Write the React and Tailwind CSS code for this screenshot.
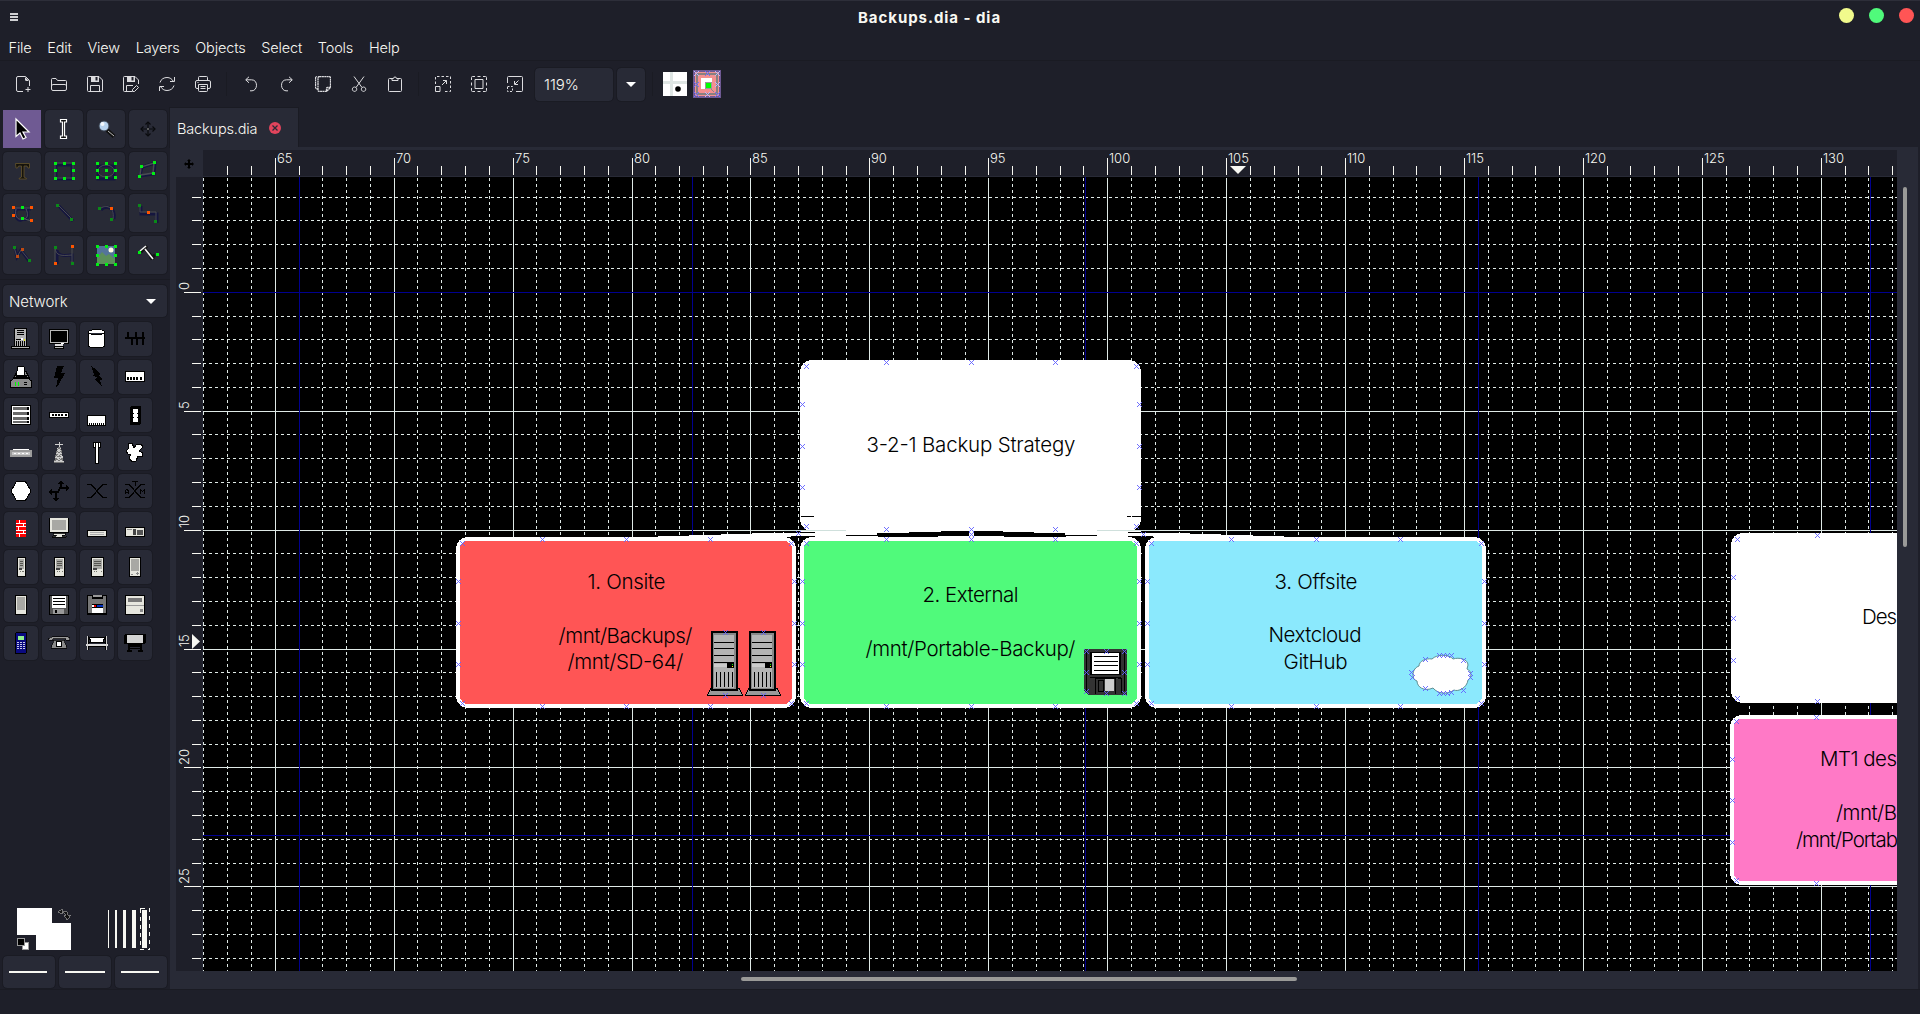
import React from "react";

const INK = "#f8f8f2";
const STEP = 23.785;
const gx = (v) => Math.floor(275.25 + (v - 65) * STEP);
const gy = (v) => Math.floor(292.25 + v * STEP);
const range = (a, b) => Array.from({ length: b - a + 1 }, (_, i) => a + i);

/* ---------- small drawing helpers ---------- */
const R = ({ x, y, w, h, c = "#000" }) => <rect x={x} y={y} width={w} height={h} fill={c} />;
const P = ({ d, c = "#000", w = 1, f = "none" }) => <path d={d} stroke={c} strokeWidth={w} fill={f} />;
const G = (pts) => pts.map(([x, y], i) => <R key={"g" + i} x={x} y={y} w={3} h={3} c="#00f014" />);
const GD = (pts) => pts.map(([x, y], i) => <R key={"d" + i} x={x} y={y} w={3} h={3} c="#0a8a18" />);
const O = (pts) => pts.map(([x, y], i) => <R key={"o" + i} x={x} y={y} w={3} h={3} c="#ff5500" />);
const OD = (pts) => pts.map(([x, y], i) => <R key={"p" + i} x={x} y={y} w={3} h={3} c="#c04a10" />);

/* ---------- toolbar icons, 16 x 16 ---------- */
const bar = {
  new: <><path d="M8 15.500H3a1.500 1.500 0 0 1-1.500-1.500V2A1.500 1.500 0 0 1 3 .5h7.500l4 4V10M10.500 13.500h5M13 11v5" /><path d="M10 1l4 4h-2.500A1.500 1.500 0 0 1 10 3.500z" fill="#dcdcdf" stroke="none" /></>,
  open: <path d="M.5 13V3.500a1 1 0 0 1 1-1H5l1.500 2h8a1 1 0 0 1 1 1V13a1.500 1.500 0 0 1-1.500 1.500H2A1.500 1.500 0 0 1 .5 13zM.5 9.500 2 8.500h12l1.500 1" />,
  save: <><path d="M1.500.5H12L15.500 4v10.500a1 1 0 0 1-1 1h-13a1 1 0 0 1-1-1v-13a1 1 0 0 1 1-1zM3.500 15.500v-6h9v6" /><path d="M4 0h8v6H4zM8.500 1v3.500h2V1z" fill="#dcdcdf" fillRule="evenodd" stroke="none" /></>,
  saveas: <><path d="M9 15.500H1.500a1 1 0 0 1-1-1v-13a1 1 0 0 1 1-1H12L15.500 4v4M3.500 15.500v-6H10M9.500 15.500v-2l4-4 2 2-4 4z" /><path d="M4 0h8v6H4zM8.500 1v3.500h2V1z" fill="#dcdcdf" fillRule="evenodd" stroke="none" /></>,
  refresh: <path d="M1 6.500C2 3 5 1.500 8 1.500c3 0 5 1.500 6.500 4M15.500 1v4.500H11M15 9.500c-1 3.500-4 5-7 5s-5-1.500-6.500-4M.5 15v-4.500H5" />,
  print: <path d="M3.500 4.500v-3a1 1 0 0 1 1-1h7a1 1 0 0 1 1 1v3M3.500 12.500H2A1.500 1.500 0 0 1 .5 11V6A1.500 1.500 0 0 1 2 4.500h12A1.500 1.500 0 0 1 15.500 6v5a1.500 1.500 0 0 1-1.500 1.500h-1.500M3.500 8.500h9v6a1 1 0 0 1-1 1h-7a1 1 0 0 1-1-1zM5.500 10.500h5M5.500 12.500h5M2.500 6.500h1" />,
  undo: <path d="M6 .8 2.700 3.800 6 6.800M3 3.800h5.500c3.500 0 5 2.500 5 5.500s-2 5.500-4.500 5.500H7" />,
  redo: <path d="M10 .8l3.300 3L10 6.800M13 3.800H7.500c-3.500 0-5 2.500-5 5.500s2 5.500 4.500 5.500h2" />,
  copy: <path strokeWidth="1.300" strokeDasharray="2 .4" d="M4.500.5h9.500a1.500 1.500 0 0 1 1.500 1.500v9.500l-4 4H4.500A1.500 1.500 0 0 1 3 14V2A1.500 1.500 0 0 1 4.500.5M11.500 15v-2.500a1 1 0 0 1 1-1h3M3 13.500 .5 12V2A1.500 1.500 0 0 1 2 .5" />,
  cut: <path d="M3 .5 11 11.500M13 .5 5 11.500M3.500 11a2.200 2.200 0 1 0 .1 0zM12.500 11a2.200 2.200 0 1 0 .1 0z" />,
  paste: <path d="M5 2.500H2.500a1 1 0 0 0-1 1v11a1 1 0 0 0 1 1h11a1 1 0 0 0 1-1v-11a1 1 0 0 0-1-1H11M5 4.500v-2h1.500a1.500 1.500 0 0 1 3 0H11v2z" />,
  zoomin: <><path strokeDasharray="2.500 2" d="M.5 8V.5h15v15H9" /><path d="M.5 10.500h4.500v5H.5zM7 9l4.500-4.500M8 4.500h3.500V8" /></>,
  zoomfit: <path d="M4 3.500h8v9H4zM.5 4V1.500a1 1 0 0 1 1-1H4M12 .5h2.500a1 1 0 0 1 1 1V4M15.500 12v2.500a1 1 0 0 1-1 1H12M4 15.500H1.500a1 1 0 0 1-1-1V12M6.500.5h3M6.500 15.500h3M.5 6.500v3M15.500 6.500v3" />,
  zoomout: <><path d="M.5 7V1.500a1 1 0 0 1 1-1h13a1 1 0 0 1 1 1v13a1 1 0 0 1-1 1H9M11.500 4.500 8 8M7.500 5v3.500H11" /><path strokeDasharray="2 1.500" d="M.5 10.500h5v5h-5z" /></>,
};

const BarIcon = ({ name }) => (
  <button className="flex h-9 w-9 items-center justify-center">
    <svg className="h-4 w-4" viewBox="0 0 16 16" fill="none" stroke="#dcdcdf" strokeWidth="1">{bar[name]}</svg>
  </button>
);
const BarSep = () => <div className="mx-[5px] h-6 w-[2px] border-l border-[#1a1b23]" />;

/* ---------- drawing tools, 22 x 22 ---------- */
const NAVY = "#15163f";
const sh = (d) => <P d={d} c={NAVY} w={3} />;
const at = (x, y, node) => <g transform={`translate(${x} ${y})`}>{node}</g>;
const tools = [
  <path d="M5 1v17.500l4-3.500 3 6 3-1.500-3-5.500h6z" fill="#000" stroke="#fff" strokeWidth="1.200" />,
  <path d="M7.500 1.500h6v2.500h-2v14h2v2.500h-6V18h2V4h-2z" fill="#111" stroke="#fff" strokeWidth="1.200" />,
  at(2, 1, <><P d="M10 11l7 6.500" c="#111" w={4} /><P d="M11 12l6 5" c="#b9b9b9" w={1} /><circle cx="7" cy="7" r="5" fill="#b6d2ee" stroke="#39414e" /><circle cx="5.500" cy="5" r="2" fill="#f3f8fd" /></>),
  <><P d="M11 4v14M4 11h14" c="#090a0d" w={1.200} /><P d="M8.500 6.500 11 4l2.500 2.500M8.500 15.500 11 18l2.500-2.500M6.500 8.500 4 11l2.500 2.500M15.500 8.500 18 11l-2.500 2.500" c="#090a0d" w={1.200} /><circle cx="11" cy="11" r="1" fill="#777" /></>,
  <path d="M4.500 3.500h14V8h-1.500l-1-2h-3v11l2.500 1.500v.5H8v-.5l2.500-1.500V6h-3l-1 2H5z" fill="#15130c" stroke="#64542c" strokeWidth=".8" />,
  <>{sh("M3 5h16v14H3z")}<P d="M2 3h18v15H2z" c="#4a4b52" />{G([[1, 2], [10, 2], [19, 2], [1, 9], [19, 9], [1, 17], [10, 17], [19, 17]])}</>,
  at(0, 1, <>{sh("M3 5h16v13H3z")}<ellipse cx="11" cy="10" rx="8" ry="6" fill="none" stroke="#4a4b52" />{G([[1, 1], [10, 1], [19, 1], [1, 8], [10, 8], [19, 8], [1, 15], [10, 15], [19, 15]])}</>),
  at(0, 1, <>{sh("M3 15 5 6l13-4-1 11z")}<P d="M3 14 4 6l13-4-1 10z" c="#4a4b52" w={1.500} />{G([[1, 14], [3, 4], [16, 0], [15, 11]])}</>),
  at(0, 3, <>{sh("M3 4h17M5 5c-2 10 5 12 7 9 4 2 6-2 4-10")}<P d="M2 3h18M5 4c-2 9 4 12 6 9 5 3 7-3 4-9M11 13l9 3" c="#54555c" />{O([[1, 1], [19, 1], [1, 9], [19, 14]])}{G([[10, 1], [10, 12]])}</>),
  at(2, 2, <>{sh("M4 2 18 17")}<P d="M3 1 17 15" c="#4b4c50" />{GD([[1, 0], [15, 14]])}</>),
  at(2, 3, <>{sh("M4 5c5-5 15-3 13 9")}<P d="M3 4c5-5 15-3 13 10" c="#4b4c50" />{GD([[1, 2], [13, 13]])}{O([[13, 2]])}</>),
  at(1, 2, <>{sh("M3 2v8h16v9")}<P d="M2 1v7h16v9" c="#4b4c50" />{GD([[0, 0], [16, 16]])}{O([[9, 7]])}</>),
  at(1, 1, <>{sh("M3 3 5 12 9 5 17 16")}<P d="M2 2 5 12 9 5 17 15" c="#4b4c50" />{GD([[1, 1], [16, 14]])}{OD([[4, 10], [9, 3]])}</>),
  at(0, 1, <>{sh("M4 19V5c0 8 14 5 15 5v6")}<P d="M2 18V3c1 8 6 8 17 7M19 1v16" c="#4b4c50" />{GD([[1, 1], [18, 17]])}{O([[18, 0], [1, 17]])}</>),
  at(0, 1, <><R x={2} y={1} w={18} h={18} c="#54749a" /><circle cx="16" cy="5" r="2.500" fill="#fffce0" /><path d="M2 13l5-6 4 4 3-2 6 5v5H2z" fill="#5c8f5a" />{G([[1, 0], [10, 0], [19, 0], [1, 9], [19, 9], [1, 18], [10, 18], [19, 18]])}</>),
  at(0, 1, <><P d="M4 7 10 1M8 4l9 10M13 14l5-4" c="#111" w={3} /><P d="M3 6 9 1M8 4l8 10" c="#f4f4f4" w={1.600} />{G([[1, 6], [19, 8]])}</>),
];

/* ---------- network shapes, 22 x 22 ---------- */
const PC = ({ w, x }) => (
  <><R x={x} y={1} w={w} h={20} /><R x={x + 1} y={2} w={w - 2} h={18} c="#e6e6de" /><R x={x + 2} y={3} w={w - 4} h={10} c="#a8a8a4" />
    <P d={`M${x + 3} 5.500h${w - 6}M${x + 3} 7.500h${w - 6}M${x + 3} 9.500h${w - 6}`} c="#55554f" /><R x={x + 2} y={12} w={w > 9 ? 4 : 3} h={2} c="#444" /><P d={`M${x + 3} 15.500h1M${x + 5} 15.500h1M${x + w - 3} 15.500h1`} c="#77776f" /></>
);
const shapes = [
  <><R x={4} y={0} w={13} h={19} /><R x={5} y={1} w={11} h={17} c="#b4b4b4" /><P d="M7 2.500h7M7 4.500h7M7 6.500h7M6 11.500h5" /><R x={11} y={10} w={2} h={2} c="#fff" /><R x={14} y={11} w={1} h={2} c="#e8e800" /><P d="M6.500 13v5M8.500 13v5M10.500 13v5M12.500 13v5M14.500 13v5" /><R x={1} y={18} w={19} h={3} /><R x={2} y={19} w={17} h={1} c="#b4b4b4" /></>,
  <><R x={1} y={1} w={20} h={15} /><R x={2} y={2} w={18} h={13} c="#b8b8b8" /><R x={3} y={3} w={16} h={11} /><R x={7} y={16} w={8} h={2} c="#e0e0e0" /><R x={13} y={15} w={3} h={1} c="#fff" /><R x={6} y={18} w={10} h={3} /><R x={7} y={19} w={8} h={1} c="#b8b8b8" /></>,
  <path d="M2.500 4.500c0-4 16-4 16 0v13c0 3-16 3-16 0zM2.500 5c3 2 13 2 16 0" fill="#fff" stroke="#000" />,
  <><R x={1} y={9} w={20} h={2} />{[3, 11, 18].map((x) => <R key={x} x={x} y={4} w={2} h={6} />)}{[8, 13, 19].map((x) => <R key={x} x={x - 1} y={10} w={2} h={7} />)}</>,
  <><path d="M3.500 12.500 7 5.500h9l3.500 7z" fill="#888" stroke="#000" /><path d="M6 9h11l1 4H5z" fill="#000" /><path d="M7.500.5h6.500l1 8.500h-8.500z" fill="#fff" stroke="#000" /><path d="M.5 15 4 12.500h14L21.500 15v6H.5z" fill="#8b8b8b" stroke="#000" /><R x={5} y={16} w={1} h={4} c="#0f0" /><R x={8} y={16} w={1} h={4} c="#0f0" /><R x={14} y={16} w={3} h={1} /><R x={14} y={18} w={3} h={1} /></>,
  <path d="M9 0h7l-3 7h4L10 20l-2 1 2-9H6z" fill="#000" />,
  <path d="M5 0l3 2 6 6-1 2 4 3-3 1 2 7-7-8 2-2-4-1 1-2z" fill="#000" />,
  <><R x={1} y={5} w={20} h={11} /><R x={2} y={6} w={18} h={9} c="#fff" />{[3, 6, 9, 12, 16].map((x) => <R key={x} x={x} y={11} w={2} h={3} />)}</>,
  <><R x={1} y={1} w={20} h={20} /><R x={2} y={2} w={18} h={18} c="#fff" />{[3, 8, 13, 17].map((y) => <R key={y} x={3} y={y} w={16} h={y > 15 ? 2 : 3} c="#6a6a6a" />)}<P d="M18 3v3M18 8v3M18 13v3M18 17v2" w={2} /></>,
  <><R x={1} y={8} w={20} h={6} /><R x={2} y={9} w={18} h={4} c="#fff" />{[4, 7, 10, 13, 17].map((x) => <R key={x} x={x} y={10} w={2} h={2} />)}</>,
  <><R x={1} y={11} w={19} h={11} /><R x={2} y={12} w={17} h={9} c="#fff" />{[3, 5, 7, 9, 11, 13, 15, 17].map((x) => <R key={x} x={x} y={19} w={1} h={2} />)}</>,
  <><rect x="6" y="2" width="11" height="19" rx="2" fill="#000" /><R x={9} y={5} w={5} h={13} c="#fff" /><P d="M9 9.500h1M13 9.500h1M9 13.500h1M13 13.500h1" w={1} /></>,
  <><R x={0} y={8} w={22} h={7} c="#9c9c9c" /><R x={3} y={7} w={16} h={1} c="#fff" /><R x={2} y={10} w={18} h={3} c="#c8c8c8" />{[4, 8, 12, 16].map((x) => <R key={x} x={x} y={11} w={2} h={1} c="#fff" />)}</>,
  <><P d="M7 2.500h8M11.500 0v5" c="#d0d0d0" /><path d="M10 5h3l1 6 2 10H6l2-10z" fill="#777" /><P d="M9 8h4M8 11h6M7 15h8M6 19h10M9 6l4 5-5 4 7 5M13 6l-4 5 6 4-8 5" c="#ccc" /></>,
  <><path d="M7 0h8v6h-2v16H9V6H7z" fill="#000" /><R x={10} y={5} w={2} h={16} c="#fff" /><R x={8} y={1} w={1} h={4} c="#fff" /><R x={13} y={1} w={1} h={4} c="#fff" /><R x={10} y={1} w={2} h={4} c="#fff" /></>,
  <path d="M4 2l4-1 2 5 2-3 5-1 2 3-4 4 4 2-1 4-4-1-2 5-4 1-3-4 2-4-3 0-2-3 3-3z" fill="#fff" stroke="#000" />,
  <path d="M6.500 1.500h9L21 11l-5.500 9.500h-9L1 11z" fill="#fff" stroke="#000" />,
  <><P d="M1 12h9l2-4h9M8 20v-8M13 2v7" w={1.500} /><path d="M0 12l4-3v6zM22 8l-4-3v6zM8 22l-3-4h6zM13 0l-3 4h6z" fill="#000" /></>,
  <P d="M1 4.500h4l12 13h4M1 17.500h4l12-13h4" w={1.300} />,
  <><P d="M1 4.500h4l12 13h4M1 17.500h4l12-13h4" w={1.300} /><P d="M1.500 14v-3l1.500-2 1.500 2v3M1.500 12.500h3M8 1.500h6M11 2v4M16.500 14V9.500l2 2 2-2V14" /></>,
  <><R x={6} y={2} w={10} h={17} c="#f00" />{[5, 8, 12, 15].map((y) => <R key={y} x={6} y={y} w={10} h={1} c="#fff" />)}<R x={9} y={2} w={1} h={3} c="#fff" /><R x={13} y={6} w={1} h={2} c="#fff" /><R x={8} y={9} w={1} h={3} c="#fff" /><R x={13} y={13} w={1} h={2} c="#fff" /><R x={9} y={16} w={1} h={3} c="#fff" /></>,
  <><R x={1} y={0} w={20} h={15} /><R x={2} y={0} w={18} h={14} c="#e6e6de" /><R x={4} y={2} w={14} h={10} c="#a8a8a4" /><path d="M5 15h12v2h-3v1h4v1H4v-1h4v-1H5z" fill="#e6e6de" stroke="#000" strokeWidth=".8" /></>,
  <><R x={1} y={12} w={20} h={7} /><R x={2} y={13} w={18} h={5} c="#e6e6de" /><P d="M4 14.500h14M4 16.500h14" c="#aaa" /></>,
  <><R x={1} y={9} w={20} h={10} /><R x={2} y={10} w={18} h={8} c="#e6e6de" /><P d="M3 11.500h5" c="#888" /><R x={9} y={11} w={3} h={6} c="#444" /><R x={13} y={12} w={6} h={5} c="#555" /></>,
  <PC x={7} w={9} />, <PC x={6} w={11} />, <PC x={5} w={13} />,
  <><R x={5} y={1} w={12} h={20} /><R x={6} y={2} w={10} h={18} c="#e6e6de" /><rect x="7" y="3" width="8" height="12" rx="1" fill="#a8a8a4" /><P d="M7 18.500h2M12 17.500h3M13.500 16v3" c="#888" /></>,
  <><R x={5} y={1} w={12} h={20} /><R x={6} y={2} w={10} h={18} c="#e6e6de" /><rect x="7" y="3" width="8" height="13" rx="1" fill="#a8a8a4" /></>,
  <><R x={1} y={1} w={20} h={20} /><R x={2} y={2} w={18} h={18} c="#555" /><R x={4} y={2} w={14} h={12} c="#fff" /><P d="M5 4.500h12M5 7.500h12M5 10.500h12" /><R x={5} y={15} w={11} h={5} c="#999" /><R x={7} y={16} w={2} h={3} /></>,
  <><R x={1} y={1} w={20} h={20} /><R x={2} y={2} w={4} h={17} c="#777" /><R x={17} y={2} w={3} h={17} c="#777" /><R x={7} y={1} w={9} h={2} c="#999" /><R x={6} y={5} w={11} h={5} c="#777" /><R x={6} y={11} w={4} h={2} c="#fff" /><R x={8} y={11} w={2} h={2} c="#e00" /><R x={11} y={11} w={6} h={2} c="#0030c0" /><R x={6} y={14} w={11} h={5} c="#fff" /></>,
  <><R x={1} y={1} w={20} h={20} /><R x={2} y={2} w={18} h={18} c="#e6e6de" /><R x={4} y={4} w={14} h={4} c="#777" /><R x={2} y={11} w={18} h={1} c="#999" /><R x={16} y={15} w={3} h={3} c="#888" /></>,
  <><rect x="5" y="0" width="12" height="22" rx="2" fill="#000" /><R x={6} y={1} w={10} h={20} c="#0a0a80" /><R x={8} y={4} w={6} h={4} c="#90ee90" />{[10, 12, 14, 16].map((y) => <P key={y} d={`M7 ${y + .5}h2M10 ${y + .5}h2M13 ${y + .5}h2`} c="#c8c8e8" />)}</>,
  <><path d="M.5 8V6l3-1.500h15l3 1.500v2h-4V6.500h-13V8z" fill="#9a9a9a" stroke="#000" strokeWidth=".7" /><path d="M6 8h10l3 8H3z" fill="#8a8a8a" stroke="#000" strokeWidth=".7" /><circle cx="11" cy="12" r="3" fill="#fff" stroke="#000" /></>,
  <><R x={1} y={4} w={2} h={14} /><R x={19} y={4} w={2} h={14} /><path d="M3 5h16l-2 5H5z" fill="#fff" stroke="#000" /><R x={0} y={12} w={22} h={2} c="#ddd" /><P d="M1 14.500h20M1 10.500h20" /><R x={1} y={4} w={1} h={14} c="#ccc" /><R x={20} y={4} w={1} h={14} c="#ccc" /></>,
  <><rect x="0" y="2" width="22" height="10" rx="2" fill="#000" /><R x={3} y={3} w={16} h={8} c="#d4d4d4" /><R x={4} y={12} w={14} h={3} /><R x={4} y={13} w={2} h={6} /><R x={16} y={13} w={2} h={6} /><R x={3} y={18} w={5} h={2} /><R x={14} y={18} w={5} h={2} /><R x={6} y={16} w={10} h={1} /></>,
];

/* ---------- diagram ---------- */
const Cross = ({ x, y }) => <path d={`M${x - 2} ${y - 2}l5 5M${x + 3} ${y - 2}l-5 5`} stroke="#6060ff" strokeWidth=".9" />;
const nodePoints = (x0, y0, x1, y1) => {
  const w = (x1 - x0) / 4, h = (y1 - y0) / 4, p = [];
  [1, 2, 3].forEach((i) => {
    p.push([x0 + w * i, y0], [x0 + w * i, y1], [x0, y0 + h * i], [x1, y0 + h * i]);
  });
  p.push([x0 + 3.500, y0 + 4], [x1 - 3.500, y0 + 4], [x0 + 3.500, y1 - 3], [x1 - 3.500, y1 - 3]);
  return p.map(([a, b]) => [Math.round(a), Math.round(b)]);
};
const Node = ({ r, fill }) => (
  <rect x={r[0]} y={r[1]} width={r[2] - r[0]} height={r[3] - r[1]} rx="10" fill={fill} stroke="#fff" strokeWidth="4" shapeRendering="crispEdges" />
);
const Label = ({ x, y, w, children, start }) => (
  <text x={x} y={y} textAnchor={start ? "start" : "middle"} textLength={w} fontSize="20.500" fontWeight="360" fill="#000">{children}</text>
);
const Tower = ({ x }) => (
  <g transform={`translate(${x} 631)`} shapeRendering="crispEdges">
    <path d="M4 57 .5 64h35L32 57z" fill="#999" stroke="#000" />
    <R x={4} y={0} w={27} h={60} /><R x={6} y={2} w={23} h={56} c="#888" /><R x={7} y={4} w={20} h={53} c="#b4b4b4" />
    <P d="M7 11.500h20M7 17.500h20M7 24.500h20M7 31.500h20" /><R x={7} y={33} w={13} h={3} c="#ccc" /><R x={20} y={32} w={7} h={5} /><R x={25} y={33} w={1} h={1} c="#0f0" /><R x={25} y={35} w={1} h={1} c="#ff0" />
    <P d="M9.500 41v15M13.500 41v15M17.500 41v15M21.500 41v15M25.500 41v15" />
  </g>
);
const nodes = [
  { r: [802, 362, 1139, 529], fill: "#fff" },
  { r: [458, 539, 794, 706], fill: "#ff5555" },
  { r: [802, 539, 1139, 706], fill: "#50fa7b" },
  { r: [1147, 539, 1484, 706], fill: "#8be9fd" },
  { r: [1733, 535, 2069, 701], fill: "#fff" },
  { r: [1732, 717, 2069, 883], fill: "#ff79c6" },
];
const extra = [[798, 533], [1143, 534], [971, 534], [725, 632], [763, 632], [725, 695], [763, 695],
  [1086, 651], [1106, 651], [1124, 651], [1086, 672], [1124, 672], [1086, 691], [1106, 693], [1124, 693],
  [1411, 672], [1412, 677], [1425, 659], [1425, 688], [1439, 655], [1443, 655], [1447, 655], [1451, 655], [1463, 660], [1470, 673], [1470, 677], [1463, 690], [1439, 693], [1443, 693], [1447, 693], [1451, 692]];

const Canvas = () => (
  <svg className="block h-[794px] w-[1694px] bg-black" viewBox="203 177 1694 794">
    <g shapeRendering="crispEdges" stroke="#dfe9e6" strokeWidth="1">
      {range(62, 133).map((v) => <path key={v} d={`M${gx(v) + .5} 178V971`} strokeDasharray={v % 5 ? "3 3" : undefined} />)}
      {range(-4, 28).map((v) => <path key={v} d={`M203 ${gy(v) + .5}H1897`} strokeDasharray={v % 5 ? "3 3" : undefined} />)}
      <path d="M299.500 177V971M692.500 177V971M1085.500 177V971M1478.500 177V971M1870.500 177V971M203 292.500H1897M203 835.500H1897" stroke="#00008f" />
    </g>
    <g shapeRendering="crispEdges">
      <path d="M658 537v-1h31v-1h32v-1h31v-1h31v-1h17v-2h341v2h18v1h31v1h31v1h32v1h31v1z" fill="#fff" />
      {nodes.map((n, i) => <Node key={i} {...n} />)}
      <path d="M784 532.500h31M1128 532.500h31M801 516.500h13M1127 516.500h4M1132 516.500h9" stroke="#000" />
      <path d="M784 530.500h62M1097 530.500h62" stroke="#cfe0dc" />
      <path d="M790 536h25v1h-11l-3 4v-3h-5v3l-4-4zM1128 536h25v1h-4l-4 4v-3h-5v3l-3-4h-9z" fill="#000" />
      <path d="M846 535h31v-2h32v-1h32v-1h62v1h31v1h31v2h32v1h-31v1h-62v-1h-66v1h-60v-1h-32z" fill="#000" />
      <R x={969} y={530} w={5} h={9} c="#fff" />
    </g>
    <g fontFamily="Inter, 'Liberation Sans', sans-serif">
      <Label x={971} y={452} w={209}>3-2-1 Backup Strategy</Label>
      <Label x={626.500} y={589} w={78}>1. Onsite</Label>
      <Label x={625.500} y={643} w={134}>/mnt/Backups/</Label>
      <Label x={625.500} y={669} w={116}>/mnt/SD-64/</Label>
      <Label x={970.500} y={602} w={96}>2. External</Label>
      <Label x={970.500} y={655.500} w={210}>/mnt/Portable-Backup/</Label>
      <Label x={1316} y={589} w={83}>3. Offsite</Label>
      <Label x={1315} y={642} w={93}>Nextcloud</Label>
      <Label x={1315.500} y={669} w={64}>GitHub</Label>
      <Label start x={1862} y={624} w={35}>Des</Label>
      <Label start x={1820} y={766} w={77}>MT1 des</Label>
      <Label start x={1836} y={820} w={61}>/mnt/B</Label>
      <Label start x={1796} y={847} w={102}>/mnt/Portab</Label>
    </g>
    <Tower x={707} /><Tower x={745} />
    <g transform="translate(1084 649)" shapeRendering="crispEdges">
      <path d="M0 0h43v46H4l-4-4z" fill="#333" /><P d="M2.500 2v40M40.500 2v40M5.500 28h31" />
      <R x={6} y={3} w={31} h={23} /><R x={8} y={4} w={27} h={21} c="#fff" /><P d="M10 7.500h24M10 12.500h24M10 16.500h24M10 21.500h24" w={1} />
      <P d="M11.500 45V29.500h20V45M14.500 31.500h5v11h-5zM33.500 29.500h4V44" /><R x={21} y={30} w={9} h={12} c="#ccc" />
    </g>
    <path d="M1413 675c0-5 3-8 6-9 0-5 7-8 13-7 5-5 17-5 21 0 6-2 15 0 15 6l-1 4c5 2 5 9 1 11-1 8-10 12-14 10-7 5-16 4-21-2-9 4-16-1-16-7-3-1-4-3-4-6z" fill="#fff" stroke="#5f8f94" />
    <g shapeRendering="crispEdges">
      {nodes.flatMap((n) => nodePoints(...n.r)).concat(extra).map(([x, y], i) => <Cross key={i} x={x} y={y} />)}
    </g>
  </svg>
);

const HRuler = () => (
  <svg className="block h-[26px] w-[1694px] bg-[#1e1f29]" viewBox="203 150 1694 26" fontFamily="Inter, sans-serif">
    {range(63, 133).map((v) => (
      <g key={v}>
        <path d={`M${gx(v) + .5} ${v % 5 ? 166 : 158}V175`} stroke={INK} shapeRendering="crispEdges" />
        {v % 5 === 0 && <text x={gx(v) + 2} y="163" fontSize="13" fontWeight="360" fill={INK}>{v}</text>}
      </g>
    ))}
    <path d="M1230 166h16l-8 8z" fill={INK} />
  </svg>
);
const VRuler = () => (
  <svg className="block h-[794px] w-[26px] bg-[#1e1f29]" viewBox="176 177 26 794" fontFamily="Inter, sans-serif">
    {range(-4, 28).map((v) => (
      <g key={v}>
        <path d={`M${v % 5 ? 192 : 184} ${gy(v) + .5}H201`} stroke={INK} shapeRendering="crispEdges" />
        {v % 5 === 0 && <text transform={`translate(189 ${gy(v) - 2}) rotate(-90)`} fontSize="13" fontWeight="360" fill={INK}>{v}</text>}
      </g>
    ))}
    <path d="M192 634v15l8-7.500z" fill={INK} />
  </svg>
);

const Toolbox = () => (
  <aside className="flex w-[170px] flex-col">
    <div className="ml-[3px] mt-[3px] grid w-[164px] grid-cols-4 gap-1">
      {tools.map((t, i) => (
        <button key={i} className={i === 0 ? "flex h-[38px] w-[38px] items-center justify-center bg-[#6f5a93]" : "flex h-[38px] w-[38px] items-center justify-center rounded-sm bg-[#282a36] outline outline-[#1a1b23]"}>
          <svg className="h-[22px] w-[22px] overflow-visible" viewBox="0 0 22 22">{t}</svg>
        </button>
      ))}
    </div>
    <div className="mt-[5px] h-px bg-[#1a1b23]" />
    <div className="ml-[3px] mt-[5px] flex h-8 w-[164px] items-center justify-between rounded-sm bg-[#282a36] pl-1.5 pr-[11px] text-[15px] outline outline-[#1a1b23]">
      <span className="pt-0.5 tracking-[-0.1px]">Network</span>
      <svg className="h-[5px] w-[10px]" viewBox="0 0 10 5"><path d="M0 0h10L5 5z" fill="#fff" /></svg>
    </div>
    <div className="ml-1 mt-[5px] grid w-[148px] grid-cols-4 gap-1">
      {shapes.map((s, i) => (
        <button key={i} className="flex h-[34px] w-[34px] items-center justify-center rounded-sm bg-[#282a36] outline outline-[#1a1b23]">
          <svg className="h-[22px] w-[22px] overflow-visible" viewBox="0 0 22 22" shapeRendering="crispEdges">{s}</svg>
        </button>
      ))}
    </div>
    <div className="mt-auto flex h-[42px] items-start justify-between pl-[17px] pr-5">
      <svg className="h-[42px] w-[54px]" viewBox="17 908 54 42" shapeRendering="crispEdges">
        <path d="M36 923h35v27H36zM17 908h35v27H17z" fill="#fff" />
        <rect x="22.500" y="942.500" width="6" height="7" fill="#fff" stroke="#999" />
        <rect x="17.500" y="938.500" width="7" height="7" fill="#000" stroke="#999" />
        <path d="M58 912l4-3v2h3c2 0 3 2 3 4h3l-4 5-3-5h2l-3-3h-1v2z" fill="#111" stroke="#8a8a8a" strokeWidth=".8" />
      </svg>
      <svg className="h-[42px] w-[42px]" viewBox="108 908 42 42" shapeRendering="crispEdges" fill={INK}>
        <rect x="108" y="910" width="1" height="38" /><rect x="115" y="910" width="2" height="38" /><rect x="123" y="910" width="3" height="38" /><rect x="132" y="910" width="4" height="38" /><rect x="142" y="910" width="5" height="38" />
        <rect x="140.500" y="908.500" width="9" height="41" fill="none" stroke={INK} strokeDasharray="4 4" />
      </svg>
    </div>
    <div className="mb-px ml-[3px] mt-1.5 flex gap-1">
      {[0, 1, 2].map((i) => (
        <button key={i} className="flex h-8 w-[52px] items-center justify-start rounded-sm bg-[#282a36] pl-1.5 outline outline-[#1a1b23]">
          <span className={i === 1 ? "h-0.5 w-10 bg-[#f8f8f2]" : "h-0.5 w-[38px] bg-[#f8f8f2]"} />
        </button>
      ))}
    </div>
  </aside>
);

export default function App() {
  return (
    <div className="flex h-[1014px] w-[1920px] flex-col overflow-hidden border-t border-[#2d2e39] bg-[#1e1f29] font-[Inter,'Liberation_Sans',sans-serif] font-[360] text-[#f8f8f2]">
      <header className="flex h-[32px] items-center">
        <div className="flex w-5 flex-col gap-px pl-2.5">
          <i className="h-0.5 w-2 bg-[#d0d0d3]" /><i className="h-0.5 w-2 bg-[#d0d0d3]" /><i className="h-0.5 w-2 bg-[#d0d0d3]" />
        </div>
        <h1 className="flex-1 pt-0.5 text-center text-[15px] font-bold leading-8 tracking-[0.95px]">Backups.dia - dia</h1>
        <div className="mb-[3px] flex w-[81px] gap-[15px]">
          <span className="h-[15px] w-[15px] rounded-full bg-[#f1fa8c]" />
          <span className="h-[15px] w-[15px] rounded-full bg-[#50fa7b]" />
          <span className="h-[15px] w-[15px] rounded-full bg-[#ff5555]" />
        </div>
      </header>
      <nav className="flex h-[28px] items-center gap-[15.700px] border-b border-[#1a1b23] pl-[8.500px] pt-0.5 text-[14.500px] leading-7 tracking-[-0.15px]">
        {["File", "Edit", "View", "Layers", "Objects", "Select", "Tools", "Help"].map((m) => <span key={m}>{m}</span>)}
      </nav>
      <div className="flex h-[46px] items-center pl-[5px]">
        {["new", "open", "save", "saveas", "refresh", "print"].map((n) => <BarIcon key={n} name={n} />)}
        <BarSep />
        {["undo", "redo", "copy", "cut", "paste"].map((n) => <BarIcon key={n} name={n} />)}
        <BarSep />
        {["zoomin", "zoomfit", "zoomout"].map((n) => <BarIcon key={n} name={n} />)}
        <div className="ml-0.5 flex h-[33px] w-[78px] items-center rounded-sm bg-[#282a36] pl-[9px] pt-0.5 text-[15px] outline outline-[#1a1b23]">119%</div>
        <div className="ml-1 flex h-[33px] w-7 items-center justify-center rounded-sm bg-[#282a36] outline outline-[#1a1b23]">
          <svg className="h-[5px] w-[10px]" viewBox="0 0 10 5"><path d="M0 0h10L5 5z" fill="#fff" /></svg>
        </div>
        <div className="ml-[7px] h-6 w-[11px] border-l border-[#1a1b23]" />
        <svg className="h-6 w-6" viewBox="0 0 24 24"><R x={0} y={0} w={24} h={24} c="#fff" /><R x={7} y={0} w={3} h={24} c="#dfe6e4" /><R x={0} y={9} w={24} h={3} c="#dfe6e4" /><circle cx="15" cy="17" r="2.800" /></svg>
        <svg className="ml-1.5 h-7 w-7" viewBox="0 0 28 28" shapeRendering="crispEdges">
          <R x={0} y={0} w={28} h={28} c="#6f5a93" /><R x={2} y={2} w={24} h={24} c="#f49090" />
          <rect x="4" y="4" width="20" height="20" fill="none" stroke="#8a8080" strokeWidth="2" />
          <R x={8} y={8} w={11} h={11} c="#fff" /><R x={12} y={12} w={7} h={7} c="#999" /><R x={13} y={13} w={5} h={5} c="#0f0" />
          {[[3, 3], [14, 3], [24, 3], [3, 14], [24, 14], [3, 24], [14, 24], [24, 24]].map(([x, y], i) => <path key={i} d={`M${x - 2} ${y - 2}l5 5M${x + 3} ${y - 2}l-5 5`} stroke={i % 2 ? "#7070ff" : "#b8b8ff"} />)}
          <path d="M18 19l3 3" stroke="#888" />
        </svg>
      </div>
      <main className="flex h-[882px]">
        <Toolbox />
        <section className="flex w-[1748px] flex-col">
          <div className="mt-px flex h-[39px] w-[128px] items-center bg-[#282a36] pl-[7px] pt-px text-[14.500px] tracking-[-0.15px] outline outline-[#1a1b23]">
            <span className="w-[92px] pt-0.5">Backups.dia</span>
            <svg className="h-3 w-3" viewBox="0 0 12 12"><circle cx="6" cy="6" r="6" fill="#e2445c" /><path d="M3.500 3.500l5 5M8.500 3.500l-5 5" stroke="#282a36" strokeWidth="1.200" /></svg>
          </div>
          <div className="flex h-[842px] flex-col bg-[#282a36] pl-1.5 pt-[3px]">
            <div className="flex">
              <div className="flex h-[27px] w-[27px] items-center justify-center pr-0.5">
                <svg className="h-2.5 w-2.5" viewBox="0 0 10 10"><path d="M5 0l2 2H6v2h2V3l2 2-2 2V6H6v2h1l-2 2-2-2h1V6H2v1L0 5l2-2v1h2V2H3z" /></svg>
              </div>
              <HRuler />
            </div>
            <div className="flex">
              <VRuler />
              <div className="w-px" />
              <Canvas />
              <div className="w-[21px] pl-1.5 pt-2.5"><div className="h-[360px] w-1 rounded-full bg-[#9a9a98]" /></div>
            </div>
            <div className="ml-[565px] mt-1.5 h-1 w-[556px] rounded-full bg-[#9a9a98]" />
          </div>
        </section>
      </main>
      <footer className="flex-1 border-t border-[#1a1b23]" />
    </div>
  );
}
